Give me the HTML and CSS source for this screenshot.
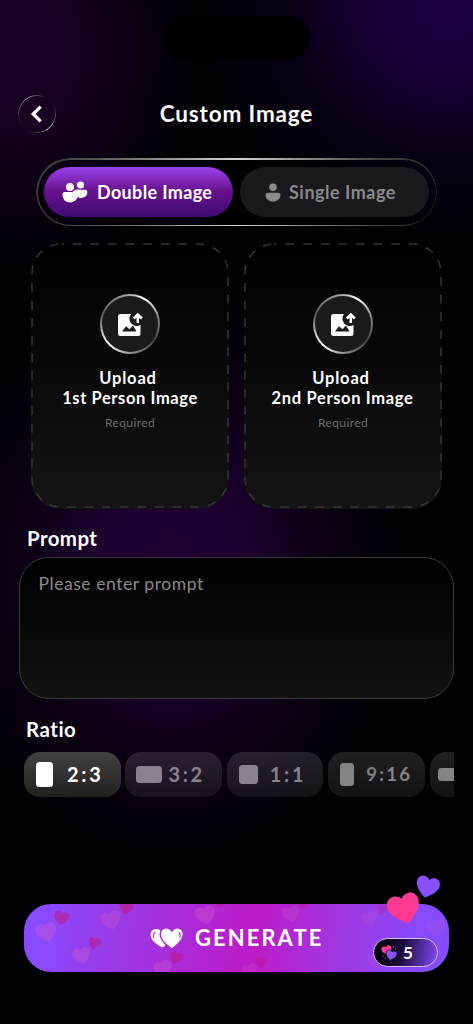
FILE: index.html
```html
<!DOCTYPE html>
<html lang="en">
<head>
<meta charset="utf-8">
<title>Custom Image</title>
<link rel="stylesheet" href="styles.css">
</head>
<body>
<svg width="0" height="0" class="defs">
  <defs>
    <path id="heart" d="M0 9.500Q-.8 9.500-1.500 8.800C-5 6-10.200 2.500-10.200-3.200C-10.200-6.600-7.800-8.800-5-8.800C-2.900-8.800-1-7.800 0-6.200C1-7.800 2.900-8.800 5-8.800C7.800-8.800 10.200-6.600 10.200-3.200C10.200 2.500 5 6 1.500 8.800Q.8 9.500 0 9.500Z"/>
    <g id="upload-icon">
      <path fill="#fff" fill-rule="evenodd" d="M2.500 2H13A7.400 7.400 0 0 0 22.500 13V21.500A2.500 2.500 0 0 1 20 24H2.500A2.500 2.500 0 0 1 0 21.500V4.500A2.500 2.500 0 0 1 2.500 2ZM4 19.500H18.500L15 13.500L11.500 17.300L8 14.300Z"/>
      <path fill="none" stroke="#fff" stroke-width="2.500" d="M19.800 11V3.500M15.800 6.500L19.800 2.500L23.800 6.500"/>
    </g>
  </defs>
</svg>
<main class="screen">
  <div class="island"></div>

  <header class="header">
    <button class="back" aria-label="Back">
      <svg width="12" height="18" viewBox="0 0 12 18"><path d="M9.500 2.800L3.200 9L9.500 15.200" fill="none" stroke="#fff" stroke-width="3.200" stroke-linecap="square" stroke-linejoin="miter"/></svg>
    </button>
    <h1 class="title">Custom Image</h1>
  </header>

  <nav class="tabs">
    <button class="tab tab-active">
      <svg width="26" height="22" viewBox="0 0 26 22" fill="#fff">
        <circle cx="18.500" cy="4" r="3.600"/>
        <path d="M14 8.800H23Q25.300 8.800 25.300 11.500C25.300 15.500 22 17 17 17Z"/>
        <circle cx="8" cy="6" r="4"/>
        <path d="M3 11H10.500L13.500 8.800H17V13.500C15.500 18.500 12 21.500 8 21.500C4 21.500 .5 18.500 .5 13.500Q.5 11 3 11Z"/>
      </svg>
      <span class="t-double">Double Image</span>
    </button>
    <button class="tab">
      <svg width="16" height="19" viewBox="0 0 16 19" fill="#8b8a8c">
        <circle cx="8" cy="4.200" r="3.800"/>
        <path d="M3 9.700H13Q15.500 9.700 15.500 12C15.500 16 12 18.500 8 18.500C4 18.500 .5 16 .5 12Q.5 9.700 3 9.700Z"/>
      </svg>
      <span class="t-single">Single Image</span>
    </button>
  </nav>

  <section class="uploads">
    <div class="card">
      <svg class="dash" width="198" height="265"><rect x="1" y="1" width="196" height="263" rx="29"/></svg>
      <div class="ring"><svg width="25" height="25" viewBox="0 0 25 25"><use href="#upload-icon"/></svg></div>
      <p class="name"><span class="t-upload">Upload</span><span class="t-first">1st Person Image</span></p>
      <p class="required">Required</p>
    </div>
    <div class="card">
      <svg class="dash" width="198" height="265"><rect x="1" y="1" width="196" height="263" rx="29"/></svg>
      <div class="ring"><svg width="25" height="25" viewBox="0 0 25 25"><use href="#upload-icon"/></svg></div>
      <p class="name"><span class="t-upload">Upload</span><span class="t-second">2nd Person Image</span></p>
      <p class="required">Required</p>
    </div>
  </section>

  <h2 class="label label-prompt">Prompt</h2>
  <textarea class="prompt" placeholder="Please enter prompt"></textarea>

  <h2 class="label label-ratio">Ratio</h2>
  <div class="ratios">
    <button class="chip chip-active"><i class="shape s23"></i><span>2:3</span></button>
    <button class="chip"><i class="shape s32"></i><span>3:2</span></button>
    <button class="chip"><i class="shape s11"></i><span>1:1</span></button>
    <button class="chip chip-dim"><i class="shape s916"></i><span>9:16</span></button>
    <button class="chip chip-dim"><i class="shape s169"></i></button>
  </div>

  <button class="generate">
    <svg class="pattern" width="425" height="68">
      <g fill="#d05cc8" opacity=".36">
        <use href="#heart" transform="translate(22.500 28) rotate(-14) scale(1.03)"/>
        <use href="#heart" transform="translate(87 16) rotate(-14) scale(.98)"/>
        <use href="#heart" transform="translate(58 51.500) rotate(-14) scale(.86)"/>
        <use href="#heart" transform="translate(139 65) rotate(-14) scale(.9)"/>
        <use href="#heart" transform="translate(181.500 11) rotate(-14) scale(1)"/>
        <use href="#heart" transform="translate(225.500 67) rotate(-14) scale(.8)" opacity=".6"/>
        <use href="#heart" transform="translate(267 10) rotate(-14) scale(.84)" opacity=".7"/>
        <use href="#heart" transform="translate(346 15) rotate(-14) scale(.86)" opacity=".5"/>
        <use href="#heart" transform="translate(412 24) rotate(-14) scale(.98)" opacity=".5"/>
        <use href="#heart" transform="translate(352 57) rotate(-14) scale(.86)" opacity=".5"/>
      </g>
      <g fill="#c01888" opacity=".55">
        <use href="#heart" transform="translate(37.500 14) rotate(14) scale(.74)"/>
        <use href="#heart" transform="translate(102 4) rotate(14) scale(.7)"/>
        <use href="#heart" transform="translate(70.500 39.500) rotate(14) scale(.62)"/>
        <use href="#heart" transform="translate(151.700 53.500) rotate(14) scale(.64)"/>
        <use href="#heart" transform="translate(196 -2) rotate(14) scale(.65)"/>
        <use href="#heart" transform="translate(237 58.500) rotate(14) scale(.58)" opacity=".8"/>
        <use href="#heart" transform="translate(279 -1) rotate(14) scale(.6)" opacity=".7"/>
        <use href="#heart" transform="translate(358 5) rotate(14) scale(.6)" opacity=".5"/>
      </g>
    </svg>
    <svg class="gen-icon" width="34" height="22" viewBox="0 0 34 22">
      <use href="#heart" fill="#fff" transform="translate(11.500 10.500) rotate(-6) scale(1.04)"/>
      <use href="#heart" fill="#fff" stroke="#a92bd5" stroke-width="1.300" transform="translate(21.800 10.800) scale(1.13)"/>
      <path d="M29 5.500Q31 7.500 29.800 10.500M3.600 10.500Q2.600 6.800 5.300 5.500" fill="none" stroke="#a92bd5" stroke-width="1.100" stroke-linecap="round"/>
    </svg>
    <span class="gen-text">GENERATE</span>
    <svg class="hearts" width="56" height="52" viewBox="0 0 56 52">
      <use href="#heart" fill="#ff3a92" transform="translate(19.200 34.300) rotate(-15) scale(1.58)"/>
      <use href="#heart" fill="#8950ff" transform="translate(42.500 12.800) rotate(15) scale(1.14)"/>
    </svg>
    <span class="badge">
      <svg width="16" height="16" viewBox="0 0 16 16">
        <use href="#heart" fill="#ff3a92" transform="translate(5.800 5.200) rotate(-16) scale(.5)"/>
        <use href="#heart" fill="#8950ff" stroke="#100622" stroke-width="1.300" transform="translate(10.200 10.200) rotate(14) scale(.54)"/>
        <g fill="#8950ff"><circle cx="12.500" cy="1.800" r=".7"/><circle cx="14.300" cy="3.800" r=".6"/><circle cx="2" cy="11" r=".7"/><circle cx="4.200" cy="13.300" r=".6"/></g>
      </svg>
      <span>5</span>
    </span>
  </button>
</main>
</body>
</html>
```
FILE: styles.css
```css
* { box-sizing: border-box; margin: 0; padding: 0; }

body {
  background: #000;
  color: #fff;
  font-family: Lato, "Open Sans", sans-serif;
}

button { border: 0; background: none; color: inherit; font: inherit; }
svg { display: block; flex: none; }
.defs { position: absolute; }

.screen {
  width: 473px;
  height: 1024px;
  overflow: hidden;
  padding-top: 16px;
  background:
    radial-gradient(ellipse 260px 240px at 450px 5px, #1e0046 0%, #170036 30%, rgba(10, 0, 26, .75) 62%, transparent 100%),
    radial-gradient(ellipse 190px 240px at 20px 50px, #1b0028 0%, #160020 35%, rgba(11, 0, 18, .75) 65%, transparent 100%),
    radial-gradient(ellipse 240px 300px at 172px 575px, #230038 0%, #1b002c 35%, rgba(12, 0, 22, .8) 65%, transparent 100%),
    #010002;
}

.island {
  width: 147px;
  height: 44px;
  margin-left: 163px;
  border-radius: 22px;
  background: #000;
}

.header {
  display: grid;
  grid-template-columns: 38px 1fr 38px;
  align-items: center;
  height: 38px;
  margin-top: 35px;
  padding: 0 18px;
}

.back {
  position: relative;
  display: grid;
  place-items: center;
  width: 38px;
  height: 38px;
  border-radius: 50%;
  padding-right: 2px;
}

.back::before,
.tabs::before {
  content: "";
  position: absolute;
  inset: 0;
  border-radius: inherit;
  padding: 1px;
  mask: linear-gradient(#000 0 0) content-box exclude, linear-gradient(#000 0 0);
  pointer-events: none;
}

.back::before {
  background: conic-gradient(#555 0deg, #08060a 30deg, #19151c 60deg, #777 120deg, #bbb 145deg, #444 180deg, #08060a 210deg, #222 255deg, #777 310deg, #aaa 335deg, #555 360deg);
}

.title {
  text-align: center;
  font-size: 22.500px;
  line-height: 30px;
  font-weight: 700;
  letter-spacing: .85px;
  white-space: nowrap;
}

.tabs {
  position: relative;
  display: flex;
  gap: 7px;
  width: 401px;
  height: 68px;
  margin: 25px 0 0 36px;
  padding: 9px 8px;
  border-radius: 34px;
  background: linear-gradient(90deg, transparent, rgba(0, 0, 0, .8) 50%, transparent);
}

.tabs::before {
  padding: 1.500px;
  background: linear-gradient(90deg, #393739, #555 15%, #d4d4d4 50%, #444 85%, #262427);
}

.tab {
  display: flex;
  align-items: center;
  width: 189px;
  height: 50px;
  border-radius: 25px;
  background: #1a181c;
  color: #8b8a8c;
  padding-left: 25px;
  gap: 8px;
  font-size: 18px;
  font-weight: 700;
  white-space: nowrap;
}

.tab-active {
  background: linear-gradient(#9a42ea, #66108c 50%, #3d0c70);
  color: #fff;
  padding-left: 18px;
  gap: 9px;
}

.t-double { letter-spacing: .35px; }
.t-single { letter-spacing: .5px; }

.uploads {
  display: flex;
  gap: 15px;
  margin: 17px 0 0 31px;
}

.card {
  position: relative;
  display: flex;
  flex-direction: column;
  align-items: center;
  width: 198px;
  height: 266px;
  padding-top: 52px;
  border-radius: 30px;
  background: linear-gradient(#000, #151313);
}

.dash { position: absolute; inset: 0; }
.dash rect {
  fill: none;
  stroke: #363536;
  stroke-width: 1.500;
  stroke-dasharray: 8.800 8.800;
  stroke-dashoffset: 6;
}

.ring {
  display: grid;
  place-items: center;
  width: 60px;
  height: 60px;
  margin: -1px 1px 0 0;
  border: 2px solid transparent;
  border-radius: 50%;
  background:
    linear-gradient(#1b1a1b, #1b1a1b) padding-box,
    conic-gradient(#aaa 0deg, #fff 30deg, #888 75deg, #444 125deg, #888 175deg, #fff 225deg, #aaa 260deg, #555 290deg, #aaa 360deg) border-box;
}

.ring svg { margin-left: 2px; }

.name {
  display: flex;
  flex-direction: column;
  align-items: center;
  margin-top: 14px;
  font-size: 16.500px;
  line-height: 20px;
  font-weight: 700;
  white-space: nowrap;
}

.t-upload { letter-spacing: .8px; margin-right: 4px; }
.t-first { letter-spacing: .6px; }
.t-second { letter-spacing: .65px; margin-right: 1px; }

.required {
  margin-top: 7px;
  font-size: 12px;
  line-height: 16px;
  letter-spacing: .4px;
  color: #6d6c6d;
}

.label {
  font-size: 20.500px;
  line-height: 26px;
  font-weight: 700;
  letter-spacing: .4px;
}

.label-prompt { margin: 16px 0 0 27px; }
.label-ratio { margin: 17px 0 0 26px; letter-spacing: .5px; }

.prompt {
  display: block;
  width: 435px;
  height: 142px;
  margin: 6px 0 0 19px;
  padding: 14px 18.500px;
  border: 1px solid #3a393a;
  border-radius: 30px;
  background: linear-gradient(#000, #131111);
  color: #fff;
  font-family: inherit;
  font-size: 17.500px;
  line-height: 24px;
  letter-spacing: .55px;
  resize: none;
  outline: 0;
}

.prompt::placeholder { color: #8a8a8a; opacity: 1; }

.ratios {
  display: flex;
  gap: 4.700px;
  width: 430px;
  margin: 10px 0 0 24px;
  overflow: hidden;
}

.chip {
  display: flex;
  align-items: center;
  flex: none;
  width: 96.700px;
  height: 45px;
  border-radius: 16px;
  background: linear-gradient(rgba(255, 255, 255, .125), rgba(255, 255, 255, .065));
  color: #8a828e;
  font-size: 20px;
  font-weight: 700;
  letter-spacing: 2.700px;
}

.chip span { margin-top: -2px; }

.chip-active {
  background: linear-gradient(#434141, #21201d);
  color: #fff;
}

.chip-dim { color: #858485; font-size: 18.500px; letter-spacing: 2.300px; }

.shape { flex: none; border-radius: 3.500px; background: currentColor; }
.s23 { width: 17px; height: 25px; margin: 0 14px 0 12px; }
.s32 { width: 26px; height: 17px; margin: 0 6px 0 11px; }
.s11 { width: 19px; height: 19px; margin: 0 12px 0 12px; }
.s916 { width: 14px; height: 23px; margin: 0 12px 0 12px; }
.s169 { width: 23px; height: 13px; margin-left: 8px; }

.generate {
  position: relative;
  display: flex;
  align-items: center;
  width: 425px;
  height: 68px;
  margin: 107px 0 0 24px;
  padding-left: 126px;
  border-radius: 27px;
  background: linear-gradient(98deg, #884cff 3%, #a035e2 27%, #bb1dca 52%, #bb1dca 56%, #a038e2 74%, #854cff 94%);
}

.pattern { position: absolute; inset: 0; border-radius: 27px; overflow: hidden; }
.gen-icon { position: relative; }

.gen-text {
  position: relative;
  margin-left: 11px;
  font-size: 22px;
  line-height: 28px;
  font-weight: 700;
  letter-spacing: 2.050px;
}

.hearts { position: absolute; left: 361px; top: -30px; }

.badge {
  position: absolute;
  right: 11px;
  bottom: 5px;
  display: flex;
  align-items: center;
  gap: 6px;
  width: 65px;
  height: 29px;
  padding-left: 7px;
  border: 1.500px solid #d9bdf8;
  border-radius: 15px;
  background: linear-gradient(100deg, #06010f 15%, #1c0d3c 45%, #7440e0 92%);
  font-size: 17px;
  line-height: 20px;
  font-weight: 700;
}
```
